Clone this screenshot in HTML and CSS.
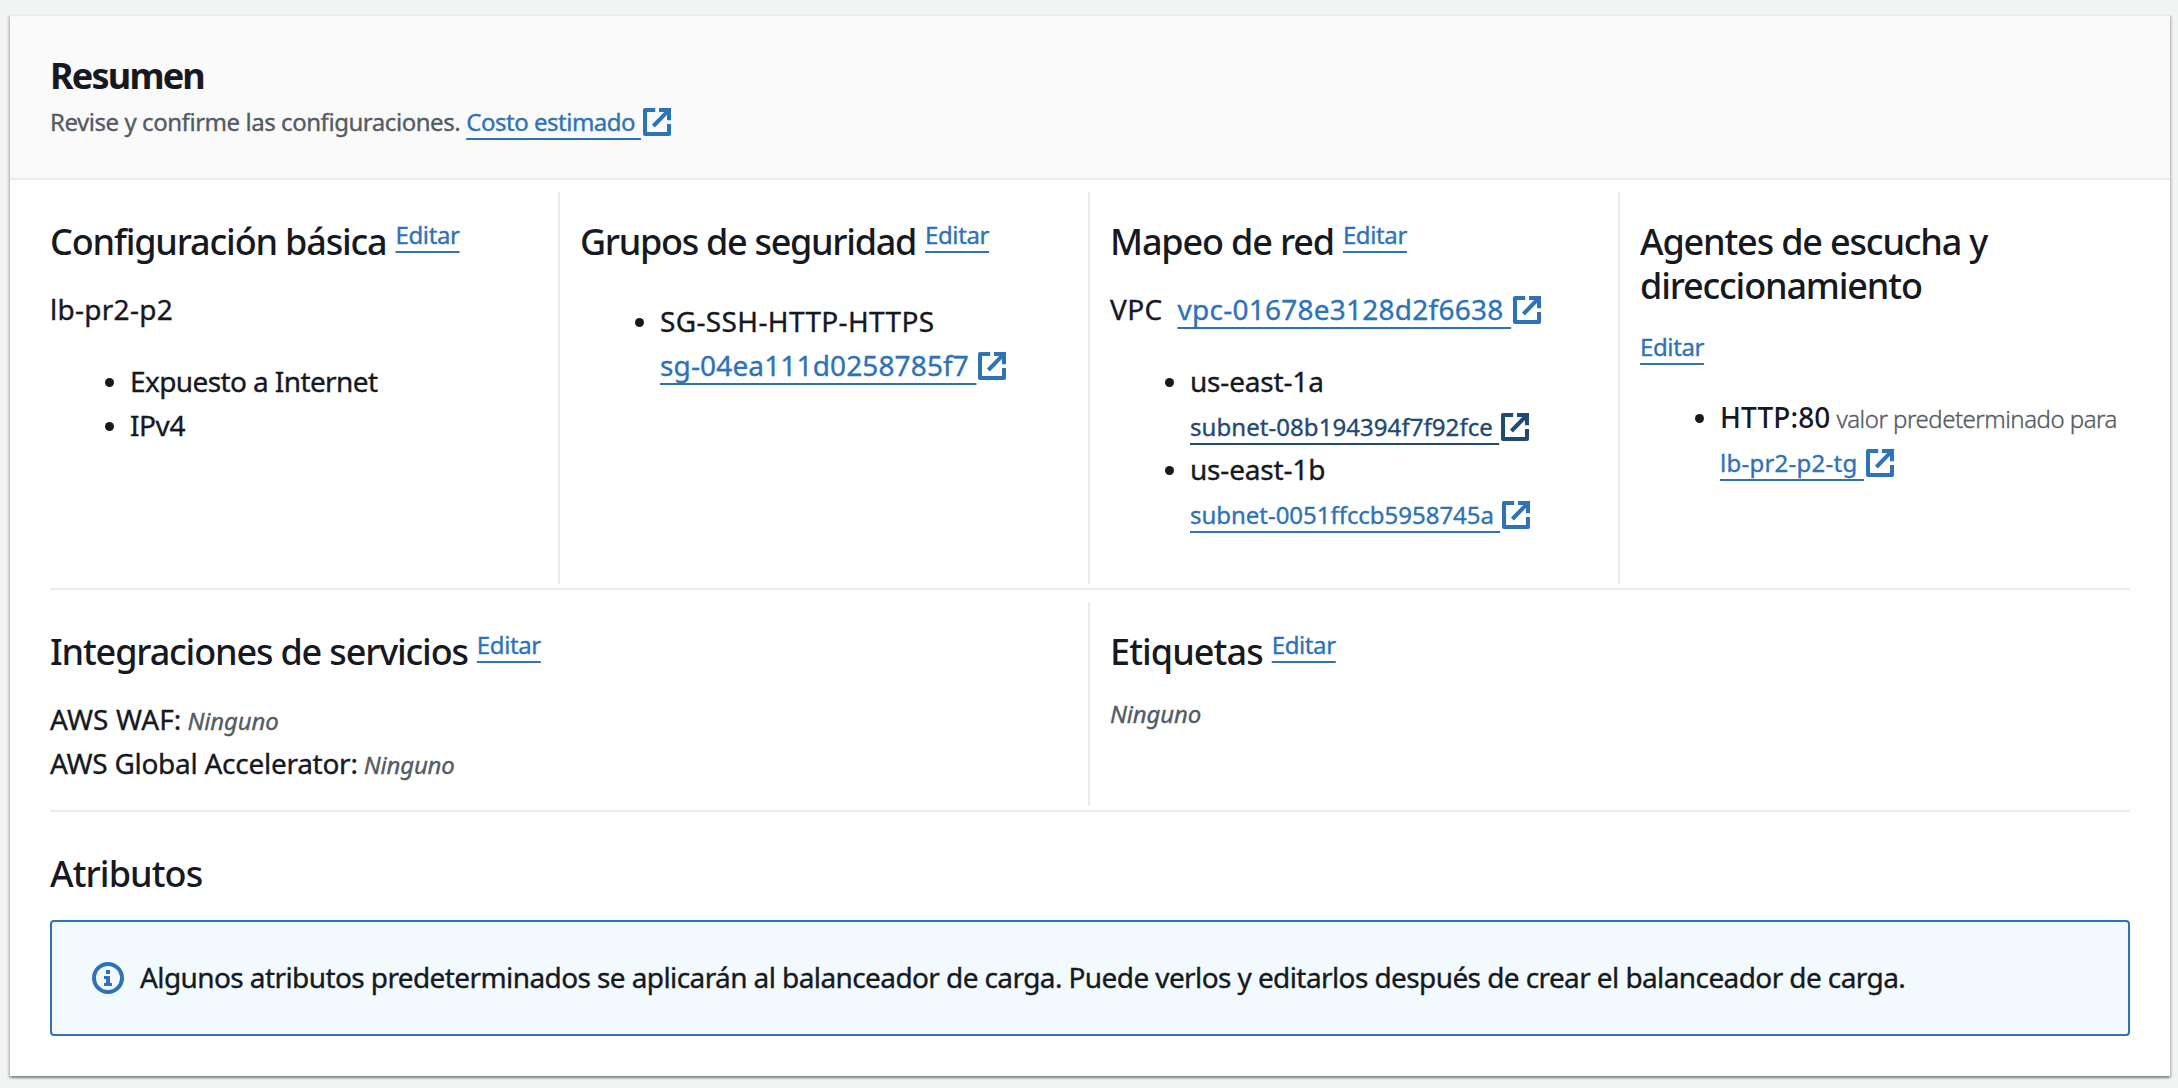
FILE: index.html
```html
<!DOCTYPE html>
<html lang="es">
<head>
<meta charset="utf-8">
<title>Resumen</title>
<link rel="stylesheet" href="styles.css">
</head>
<body>
<svg class="sprite" aria-hidden="true">
  <symbol id="external" viewBox="1 1 14 14">
    <path d="M14 9.05V14H2V2h5.1" stroke-linejoin="round"/>
    <path d="M9 2h5v5.1M13.8 2.2L6.2 10"/>
  </symbol>
</svg>
<main class="card">
  <header class="card-header">
    <h1 class="summary-title">Resumen</h1>
    <p class="summary-text"><span class="description">Revise y confirme las configuraciones.</span><a class="link cost" href="#"><span>Costo estimado&nbsp;</span><svg class="ext"><use href="#external"/></svg></a></p>
  </header>

  <div class="content">
    <div class="row">
      <section class="cell cell-basic">
        <div class="heading"><h2 class="title">Configuración básica</h2><a class="link edit" href="#">Editar</a></div>
        <p class="body name">lb-pr2-p2</p>
        <ul class="list">
          <li class="expose">Expuesto a Internet</li>
          <li class="ip">IPv4</li>
        </ul>
      </section>
      <section class="cell cell-groups">
        <div class="heading"><h2 class="title groups-title">Grupos de seguridad</h2><a class="link edit" href="#">Editar</a></div>
        <ul class="list">
          <li><span class="group-name">SG-SSH-HTTP-HTTPS</span><br><a class="link group-id" href="#"><span>sg-04ea111d0258785f7&nbsp;</span><svg class="ext"><use href="#external"/></svg></a></li>
        </ul>
      </section>
      <section class="cell cell-network">
        <div class="heading"><h2 class="title">Mapeo de red</h2><a class="link edit" href="#">Editar</a></div>
        <p class="body vpc"><span class="vpc-label">VPC</span><a class="link vpc-id" href="#"><span>vpc-01678e3128d2f6638&nbsp;</span><svg class="ext"><use href="#external"/></svg></a></p>
        <ul class="list">
          <li><span class="zone">us-east-1a</span><br><a class="link small subnet-a" href="#"><span>subnet-08b194394f7f92fce&nbsp;</span><svg class="ext"><use href="#external"/></svg></a></li>
          <li><span class="zone">us-east-1b</span><br><a class="link small subnet-b" href="#"><span>subnet-0051ffccb5958745a&nbsp;</span><svg class="ext"><use href="#external"/></svg></a></li>
        </ul>
      </section>
      <section class="cell cell-listeners">
        <h2 class="title">Agentes de escucha y direccionamiento</h2>
        <a class="link edit edit-below" href="#">Editar</a>
        <ul class="list">
          <li><span class="listener">HTTP:80</span><span class="small default-for">valor predeterminado para</span><br><a class="link small target" href="#"><span>lb-pr2-p2-tg&nbsp;</span><svg class="ext"><use href="#external"/></svg></a></li>
        </ul>
      </section>
    </div>

    <div class="row row-services">
      <section class="cell">
        <div class="heading"><h2 class="title">Integraciones de servicios</h2><a class="link edit" href="#">Editar</a></div>
        <p class="body services"><span class="waf">AWS WAF:</span><em class="none">Ninguno</em></p>
        <p class="body"><span class="accelerator">AWS Global Accelerator:</span><em class="none">Ninguno</em></p>
      </section>
      <section class="cell">
        <div class="heading"><h2 class="title short-title">Etiquetas</h2><a class="link edit" href="#">Editar</a></div>
        <p class="tags"><em class="none">Ninguno</em></p>
      </section>
    </div>

    <section class="attributes">
      <h2 class="title short-title">Atributos</h2>
      <div class="alert">
        <svg class="info" viewBox="0 0 16 16">
          <circle cx="8" cy="8" r="7"/>
          <path d="M7 4h2v2H7zM6 7h3v3.500h1V12H6v-1.500h1V8.500H6z"/>
        </svg>
        <p class="alert-text">Algunos atributos predeterminados se aplicarán al balanceador de carga. Puede verlos y editarlos después de crear el balanceador de carga.</p>
      </div>
    </section>
  </div>
</main>
</body>
</html>
```

FILE: styles.css
```css
* { box-sizing: border-box; margin: 0; padding: 0; }

body {
  padding: 14px 8px 12px 10px;
  background: #f2f4f3;
  color: #16191f;
  font: 400 28px/44px "Noto Sans", "Open Sans", sans-serif;
  -webkit-text-stroke: .35px currentColor;
}

.sprite { position: absolute; width: 0; height: 0; }
#external path { fill: none; stroke: currentColor; stroke-width: 2; }

.card {
  height: 1062px;
  border-top: 2px solid #eaeded;
  background: #fff;
  box-shadow: 0 2px 2px 0 rgba(0, 28, 36, .3), 2px 2px 2px 0 rgba(0, 28, 36, .15), -2px 2px 2px 0 rgba(0, 28, 36, .15);
}

.card-header {
  height: 164px;
  padding: 38px 40px 0;
  border-bottom: 2px solid #ebebeb;
  background: #fafafa;
}
.summary-title {
  font-size: 36px;
  font-weight: 700;
  letter-spacing: -1.8px;
  -webkit-text-stroke: 0;
}
.summary-text { margin-top: 2px; font-size: 24px; }
.description { margin-right: 6px; color: #545b64; letter-spacing: -.45px; }

.link {
  color: #2e72b8;
  text-decoration: none;
  white-space: nowrap;
}
.link.edit, .link span {
  text-decoration: underline;
  text-decoration-thickness: 2px;
  text-decoration-skip-ink: none;
  text-underline-offset: 7px;
}
.small { font-size: 24px; line-height: 30px; }
.ext {
  width: 28px;
  height: 28px;
  margin-left: 2px;
  vertical-align: -5px;
}
.cost { letter-spacing: -.48px; }

.content { padding: 0 40px; }
.row {
  display: grid;
  grid-template-columns: 508px 530px 530px 1fr;
  height: 410px;
  padding: 12px 0 4px;
  border-bottom: 2px solid #ebebeb;
}
.row-services {
  grid-template-columns: 1038px 1fr;
  height: 222px;
}
.cell { padding-top: 27px; }
.cell + .cell { padding-left: 20px; border-left: 2px solid #ebebeb; }

.heading { display: flex; align-items: flex-start; gap: 9px; }
.title {
  margin-bottom: -1px;
  padding-top: 1px;
  font-size: 36px;
  font-weight: 500;
  line-height: 44px;
  letter-spacing: -1.16px;
  -webkit-text-stroke: 0;
}
.groups-title { letter-spacing: -1.3px; }
.short-title { letter-spacing: -.92px; }
.edit { font-size: 24px; line-height: 31px; letter-spacing: -.39px; }
.edit-below { display: block; width: max-content; margin-top: 24px; }

.list { padding-left: 80px; list-style: none; }
.list li { position: relative; white-space: nowrap; }
.list li::before {
  content: "";
  position: absolute;
  left: -25px;
  top: 19px;
  width: 9px;
  height: 9px;
  border-radius: 50%;
  background: currentColor;
}

.name { margin-top: 24px; letter-spacing: .27px; }
.cell-basic .list { margin-top: 28px; }
.expose { letter-spacing: -.6px; }
.ip { letter-spacing: -.42px; }

.cell-groups .list { margin-top: 36px; }
.group-name { letter-spacing: .36px; }
.group-id { letter-spacing: .14px; }
.group-id .ext, .vpc-id .ext { vertical-align: -4px; }

.vpc { display: flex; gap: 15px; margin-top: 24px; }
.vpc-label { letter-spacing: .35px; }
.vpc-id { letter-spacing: .25px; }
.cell-network .list { margin-top: 28px; }
.zone { letter-spacing: -.18px; }
.subnet-a { color: #1f4a73; letter-spacing: .06px; }
.subnet-b { letter-spacing: -.03px; }

.cell-listeners .list { margin-top: 33px; }
.listener {
  margin-right: 6px;
  font-weight: 500;
  letter-spacing: .11px;
  -webkit-text-stroke: 0;
}
.default-for {
  color: #545b64;
  font-weight: 300;
  letter-spacing: -.49px;
}
.target { letter-spacing: .25px; }

.services { margin-top: 24px; }
.waf { margin-right: 6px; letter-spacing: .15px; }
.accelerator { margin-right: 6px; letter-spacing: -.27px; }
.none { color: #545b64; font-size: 24px; line-height: 30px; letter-spacing: -.18px; }
.tags { margin-top: 19px; font-size: 24px; }

.attributes { padding-top: 39px; }
.alert {
  display: flex;
  align-items: center;
  gap: 16px;
  height: 116px;
  margin-top: 25px;
  padding: 0 40px;
  border: 2px solid #2e72b8;
  border-radius: 4px;
  background: #f2fafd;
}
.info { width: 32px; height: 32px; }
.info circle { fill: none; stroke: #2e72b8; stroke-width: 2; }
.info path { fill: #2e72b8; }
.alert-text { margin-top: -2px; white-space: nowrap; letter-spacing: -.594px; }
```
